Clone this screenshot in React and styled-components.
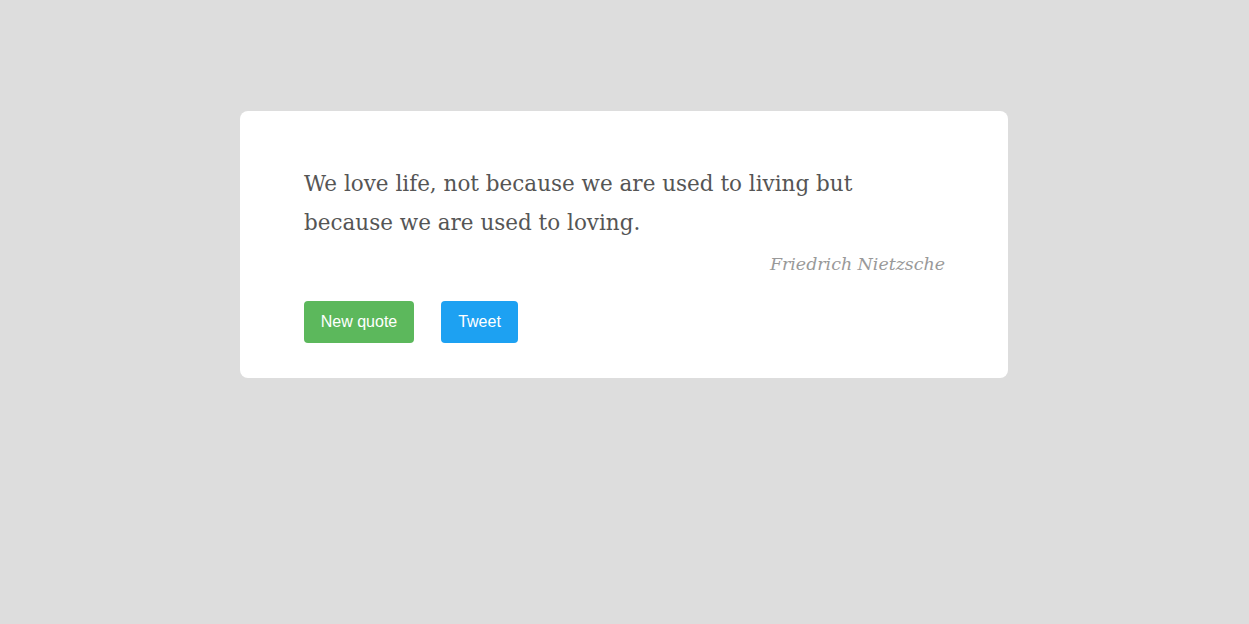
import React from 'react'
import styled, { createGlobalStyle } from 'styled-components'

const GlobalStyle = createGlobalStyle`
  html, body {
    margin: 0;
    padding: 0;
    background-color: #dddddd;
    min-height: 100%;
  }
  body {
    font-family: "DejaVu Serif", "Liberation Serif", serif;
  }
`

const Page = styled.div`
  min-height: 624px;
  display: flex;
  justify-content: center;
  align-items: flex-start;
  padding: 111px 1px 0 0;
  box-sizing: border-box;
`

const Card = styled.div`
  width: 768px;
  box-sizing: border-box;
  background-color: #fff;
  border-radius: 8px;
  padding: 53px 63px 35px 64px;
`

const Quote = styled.p`
  margin: 0;
  font-family: "DejaVu Serif", serif;
  font-size: 21.5px;
  line-height: 39px;
  color: #555;
  max-width: 600px;
`

const Author = styled.p`
  margin: 10px 0 0;
  text-align: right;
  font-family: "DejaVu Serif", serif;
  font-style: italic;
  font-size: 17.4px;
  line-height: 24px;
  color: #999;
`

const Actions = styled.div`
  display: flex;
  gap: 27px;
  margin-top: 25px;
`

const Button = styled.button`
  width: ${(p) => p.$w}px;
  height: 42px;
  padding: 0;
  border: none;
  border-radius: 4px;
  background-color: ${(p) => p.$bg};
  color: #fff;
  font-family: "Liberation Sans", Arial, sans-serif;
  font-size: 16px;
  cursor: pointer;
`

const App = () => {
  return (
    <>
      <GlobalStyle />
      <Page>
        <Card>
          <Quote>
            We love life, not because we are used to living but because we are used to loving.
          </Quote>
          <Author>Friedrich Nietzsche</Author>
          <Actions>
            <Button $bg="#5cb85c" $w={110}>New quote</Button>
            <Button $bg="#1da1f2" $w={77}>Tweet</Button>
          </Actions>
        </Card>
      </Page>
    </>
  )
}

export default App
